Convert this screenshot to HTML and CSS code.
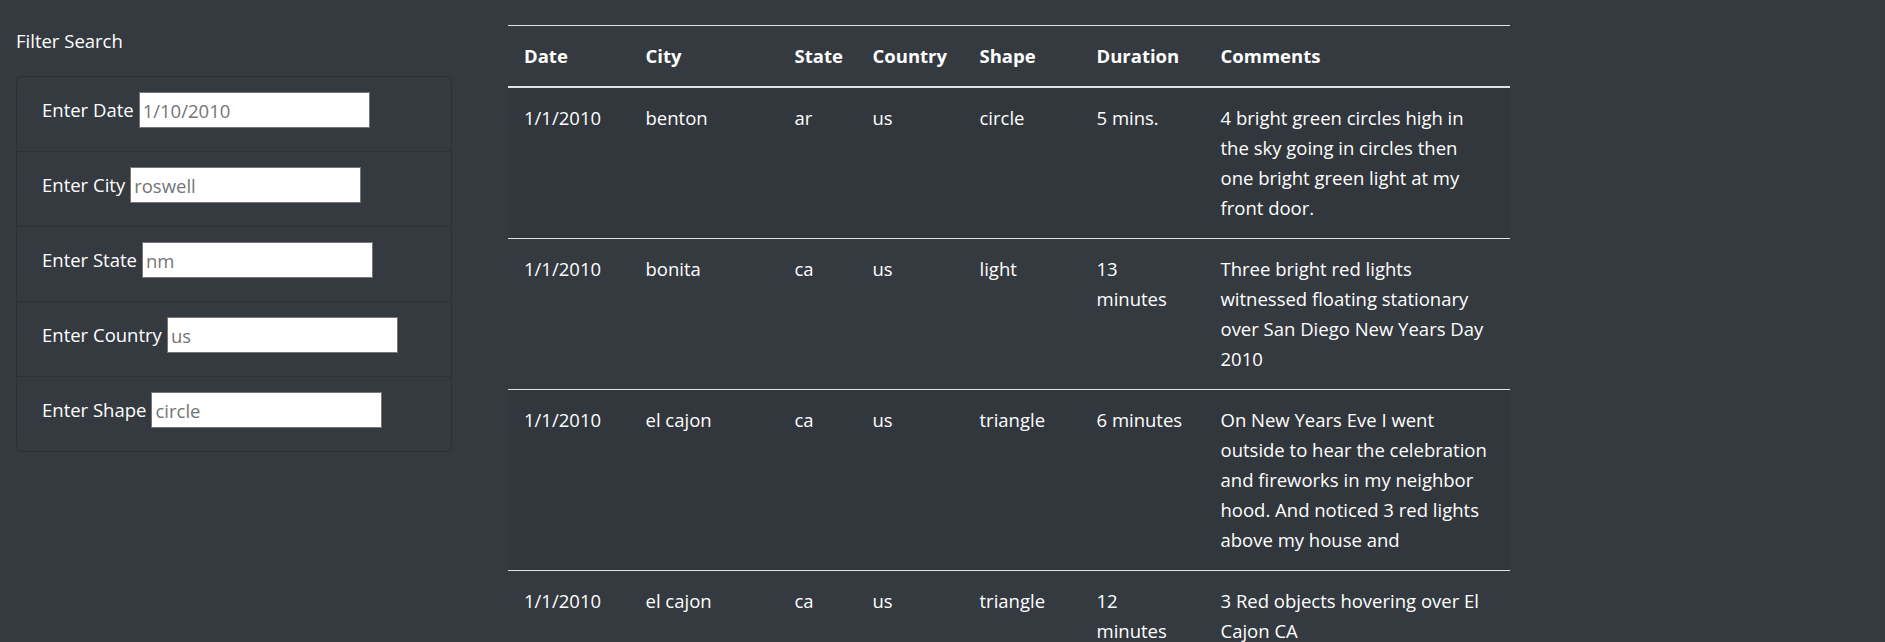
FILE: index.html
```html
<!DOCTYPE html>
<html lang="en">
<head>
<meta charset="utf-8">
<title>UFO Sightings</title>
<link rel="stylesheet" href="styles.css">
</head>
<body>
<div class="page">
  <aside class="sidebar">
    <div class="filter-title">Filter Search</div>
    <ul class="filter-list">
      <li class="filter-item"><label for="datetime">Enter Date</label><input id="datetime" type="text" placeholder="1/10/2010"></li>
      <li class="filter-item"><label for="city">Enter City</label><input id="city" type="text" placeholder="roswell"></li>
      <li class="filter-item"><label for="state">Enter State</label><input id="state" type="text" placeholder="nm"></li>
      <li class="filter-item"><label for="country">Enter Country</label><input id="country" type="text" placeholder="us"></li>
      <li class="filter-item"><label for="shape">Enter Shape</label><input id="shape" type="text" placeholder="circle"></li>
    </ul>
  </aside>
  <main class="content">
    <table class="ufo-table">
      <colgroup>
        <col class="c-date"><col class="c-city"><col class="c-state"><col class="c-country"><col class="c-shape"><col class="c-duration"><col class="c-comments">
      </colgroup>
      <thead>
        <tr><th>Date</th><th>City</th><th>State</th><th>Country</th><th>Shape</th><th>Duration</th><th class="comments">Comments</th></tr>
      </thead>
      <tbody>
        <tr><td>1/1/2010</td><td>benton</td><td>ar</td><td>us</td><td>circle</td><td>5 mins.</td><td class="comments">4 bright green circles high in the sky going in circles then one bright green light at my front door.</td></tr>
        <tr><td>1/1/2010</td><td>bonita</td><td>ca</td><td>us</td><td>light</td><td>13 minutes</td><td class="comments">Three bright red lights witnessed floating stationary over San Diego New Years Day 2010</td></tr>
        <tr><td>1/1/2010</td><td>el cajon</td><td>ca</td><td>us</td><td>triangle</td><td>6 minutes</td><td class="comments">On New Years Eve I went outside to hear the celebration and fireworks in my neighbor hood. And noticed 3 red lights above my house and</td></tr>
        <tr><td>1/1/2010</td><td>el cajon</td><td>ca</td><td>us</td><td>triangle</td><td>12 minutes</td><td class="comments">3 Red objects hovering over El Cajon CA</td></tr>
      </tbody>
    </table>
  </main>
</div>
</body>
</html>
```

FILE: styles.css
```css
html, body {
  margin: 0;
  padding: 0;
}
body {
  background: #343a40;
  color: #ffffff;
  font-family: "Open Sans", "Noto Sans", sans-serif;
  font-size: 18.5px;
  line-height: 30px;
  overflow: hidden;
}
.page {
  display: flex;
  align-items: flex-start;
}
.sidebar {
  width: 436px;
  margin-left: 16px;
  padding-top: 26px;
}
.filter-title {
  height: 30px;
  margin-bottom: 20px;
}
.filter-list {
  list-style: none;
  margin: 0;
  padding: 0;
  border: 1px solid #2c3136;
  border-radius: 5px;
}
.filter-item {
  display: flex;
  align-items: center;
  gap: 5px;
  padding: 15px 25px 23px;
  border-top: 1px solid #2c3136;
}
.filter-item:first-child {
  border-top: none;
}
.filter-item label {
  white-space: nowrap;
}
.filter-item input {
  flex: none;
  box-sizing: border-box;
  width: 231px;
  height: 36px;
  margin: 0;
  padding: 1px 3px;
  border: 1px solid #767676;
  border-radius: 0;
  background: #ffffff;
  font-family: inherit;
  font-size: 18.5px;
  color: #333;
}
.filter-item input::placeholder {
  color: #757575;
}
.content {
  margin-left: 56px;
  padding-top: 25px;
}
.ufo-table {
  width: 1002px;
  table-layout: fixed;
  border-collapse: collapse;
}
.c-date { width: 121.5px; }
.c-city { width: 149px; }
.c-state { width: 78px; }
.c-country { width: 107px; }
.c-shape { width: 117px; }
.c-duration { width: 124px; }
.c-comments { width: 305.5px; }
.ufo-table th,
.ufo-table td {
  padding: 15px 16px;
  text-align: left;
  vertical-align: top;
  border-top: 1px solid #dee2e6;
}
.ufo-table th {
  font-weight: 700;
  border-bottom: 2px solid #dee2e6;
}
.ufo-table .comments {
  padding-right: 17px;
}
.ufo-table tbody tr:nth-child(odd) {
  background: rgba(0, 0, 0, 0.05);
}
.ufo-table tbody tr:first-child td {
  border-top: none;
}
```
